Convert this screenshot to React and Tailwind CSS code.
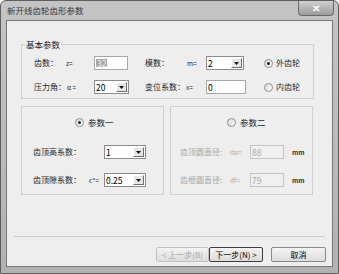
const Radio = ({ checked, disabled }) => (
  <span
    className={
      "flex h-[9px] w-[9px] shrink-0 items-center justify-center rounded-full border bg-gradient-to-br from-[#d8d8d8] to-white " +
      (disabled ? "border-[#b8b8b8]" : "border-[#8e8f8f]")
    }
  >
    {checked && <span className="h-[3px] w-[3px] rounded-full bg-[#1a1a1a]" />}
  </span>
);

const Combo = ({ w, value }) => (
  <div className={"flex h-[14px] shrink-0 items-center border border-[#8c8c8c] bg-white " + w}>
    <span className="flex-1 pl-[1px] text-[8.5px] leading-none text-black">{value}</span>
    <span className="mr-[1px] flex h-[10px] w-[11px] items-center justify-center border border-t-white border-l-white border-r-[#707070] border-b-[#707070] bg-[#e6e6e6]">
      <svg width="5" height="3" viewBox="0 0 5 3">
        <path d="M0 0h5L2.5 3z" fill="#111" />
      </svg>
    </span>
  </div>
);

const Field = ({ w, children, disabled }) => (
  <div
    className={
      "flex h-[14px] shrink-0 items-center border pl-[1px] text-[8.5px] leading-none " +
      (disabled
        ? "border-[#c4c4c4] bg-[#f0f0f0] text-[#a8a8a8] "
        : "border-[#a8a8a8] bg-white text-black ") +
      w
    }
  >
    {children}
  </div>
);

const Btn = ({ w, children, disabled, focus }) => (
  <button
    className={
      "flex h-[15px] shrink-0 items-center justify-center whitespace-nowrap rounded-[2px] border bg-gradient-to-b from-[#f4f4f4] to-[#dcdcdc] text-[8px] leading-none " +
      (disabled
        ? "border-[#c2c2c2] text-[#a4a4a4] "
        : focus
          ? "border-[#3c3c3c] text-black "
          : "border-[#8a8a8a] text-black ") +
      w
    }
  >
    {children}
  </button>
);

export default function App() {
  return (
    <div className="flex h-[274px] w-[339px] flex-col rounded-t-[6px] border border-[#5e5e5e] bg-gradient-to-b from-[#c4c4c4] to-[#b2b2b2] font-['Noto_Sans_CJK_SC','Liberation_Sans',sans-serif] text-[#1e1e1e]">
      {/* title bar */}
      <div className="flex h-[19px] items-start justify-between pl-[6px]">
        <span className="mt-[3px] text-[8.5px] leading-[12px] text-[#383838]">新开线齿轮齿形参数</span>
        <div className="mr-[4px] flex h-[15px] w-[36px] items-center justify-center rounded-b-[4px] border border-t-0 border-[#6a6a6a] bg-gradient-to-b from-[#cfcfcf] to-[#9c9c9c] text-[10px] font-bold leading-none text-white">
          ✕
        </div>
      </div>

      {/* client area */}
      <div className="mx-[5px] mb-[6px] flex flex-1 flex-col border border-[#777] bg-[#eeeeee] text-[8px]">
        <fieldset className="ml-[14px] mt-[17px] h-[61px] w-[293px] border border-[#cfcfcf]">
          <legend className="ml-[3px] px-[1px] text-[8.5px] leading-[12px]">基本参数</legend>
          <div className="flex flex-col gap-[10px] whitespace-nowrap pl-[12px] pt-[6px] leading-none">
            <div className="flex items-center">
              <span className="w-[32px] shrink-0">齿数：</span>
              <span className="w-[28px] shrink-0 text-[6.5px]">z=</span>
              <Field w="w-[34px]">
                <span className="bg-[#a6a6a6] px-[1px] text-[#f2f2f2]">32</span>
              </Field>
              <span className="ml-[17px] w-[42px] shrink-0">模数：</span>
              <span className="w-[19px] shrink-0 text-[6.5px]">m=</span>
              <Combo w="w-[38px]" value="2" />
              <span className="ml-[20px] flex items-center gap-[3px]">
                <Radio checked />
                <span>外齿轮</span>
              </span>
            </div>
            <div className="flex items-center">
              <span className="w-[33px] shrink-0">压力角：</span>
              <span className="w-[27px] shrink-0 text-[6.5px]">α =</span>
              <Combo w="w-[35px]" value="20" />
              <span className="ml-[16px] w-[41px] shrink-0">变位系数：</span>
              <span className="w-[20px] shrink-0 text-[6.5px]">x=</span>
              <Field w="w-[40px]">0</Field>
              <span className="ml-[18px] flex items-center gap-[3px]">
                <Radio />
                <span>内齿轮</span>
              </span>
            </div>
          </div>
        </fieldset>

        <div className="ml-[14px] mt-[7px] flex gap-[6px] whitespace-nowrap leading-none">
          <div className="flex h-[89px] w-[143px] flex-col border border-[#cfcfcf] pl-[11px] pt-[11px]">
            <div className="ml-[42px] flex items-center gap-[4px] text-[8.5px]">
              <Radio checked />
              <span>参数一</span>
            </div>
            <div className="mt-[18px] flex items-center">
              <span className="w-[71px] shrink-0">齿顶高系数：</span>
              <Combo w="w-[42px]" value="1" />
            </div>
            <div className="mt-[14px] flex items-center">
              <span className="w-[56px] shrink-0">齿顶隙系数：</span>
              <span className="w-[15px] shrink-0 text-[6.5px]">c*=</span>
              <Combo w="w-[42px]" value="0.25" />
            </div>
          </div>
          <div className="flex h-[89px] w-[143px] flex-col border border-[#cfcfcf] pl-[9px] pt-[11px] text-[#a8a8a8]">
            <div className="ml-[47px] flex items-center gap-[4px] text-[8.5px]">
              <Radio />
              <span className="text-[#1e1e1e]">参数二</span>
            </div>
            <div className="mt-[18px] flex items-center">
              <span className="w-[50px] shrink-0">齿顶圆直径:</span>
              <span className="w-[20px] shrink-0 text-[6.5px]">da=</span>
              <Field w="w-[34px]" disabled>88</Field>
              <span className="ml-[8px] text-[6.5px] font-bold text-[#333]">mm</span>
            </div>
            <div className="mt-[14px] flex items-center">
              <span className="w-[50px] shrink-0">齿根圆直径:</span>
              <span className="w-[20px] shrink-0 text-[6.5px]">df=</span>
              <Field w="w-[34px]" disabled>79</Field>
              <span className="ml-[8px] text-[6.5px] font-bold text-[#333]">mm</span>
            </div>
          </div>
        </div>

        <div className="mx-[7px] mt-[41px] h-[1px] bg-[#cccccc]" />

        <div className="mr-[6px] mt-[10px] flex justify-end">
          <Btn w="w-[53px]" disabled>&lt; 上一步(B)</Btn>
          <Btn w="w-[54px]" focus>下一步(N) &gt;</Btn>
          <Btn w="ml-[8px] w-[55px]">取消</Btn>
        </div>
      </div>
    </div>
  );
}
